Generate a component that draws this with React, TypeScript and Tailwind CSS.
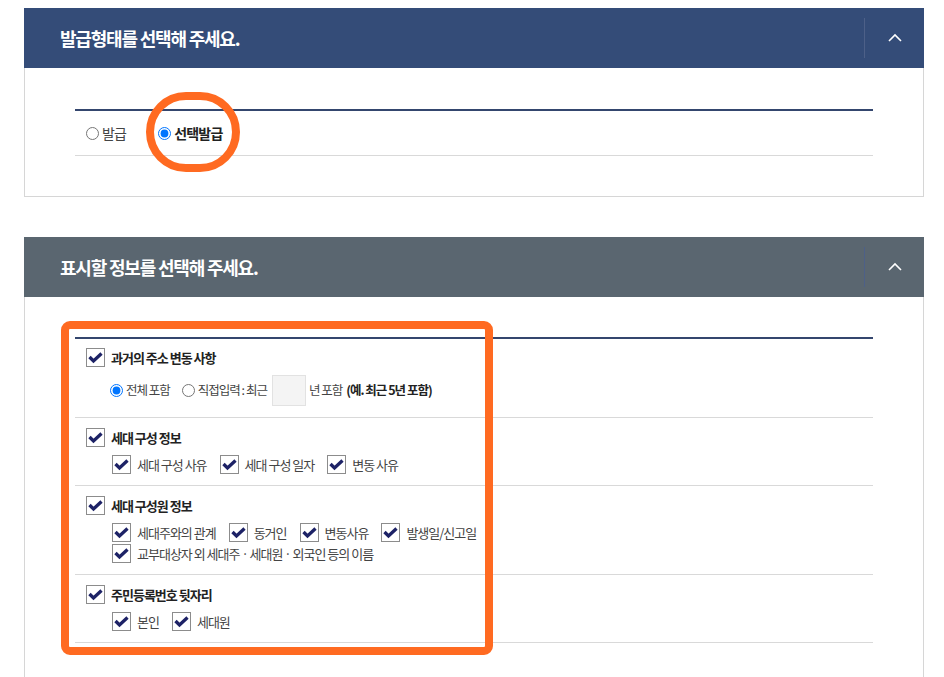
import * as React from "react";

const font = "font-['Noto_Sans_CJK_KR','Noto_Sans',sans-serif]";

function Check() {
  return (
    <span className="flex h-[19px] w-[19px] shrink-0 items-center justify-center border border-[#8c8c8c] bg-white">
      <svg width="15" height="13" viewBox="0 0 15 13">
        <path
          d="M1.5 6 L5.5 10 L13.5 2.5"
          fill="none"
          stroke="#1d2266"
          strokeWidth="3.3"
          strokeLinejoin="miter"
        />
      </svg>
    </span>
  );
}

function SubCheck({ label }: { label: string }) {
  return (
    <span className="flex items-center gap-[6px]">
      <Check />
      <span className="text-[13px] leading-[19px] tracking-[-1px] text-[#444]">{label}</span>
    </span>
  );
}

function Header({ title, bg }: { title: string; bg: string }) {
  return (
    <div className={`flex h-[60px] items-center justify-between ${bg}`}>
      <h2 className="pl-9 text-[18px] font-bold tracking-[-1.2px] text-white">{title}</h2>
      <div className="flex h-full items-center">
        <span className="h-10 w-px bg-[#4d6088]" />
        <span className="flex w-[59px] items-center justify-center">
          <svg width="16" height="10" viewBox="0 0 16 10">
            <path d="M2 8 L8 2 L14 8" fill="none" stroke="white" strokeWidth="1.6" />
          </svg>
        </span>
      </div>
    </div>
  );
}

export default function App() {
  const groups = [
    { title: "세대 구성 정보", subs: [["세대 구성 사유", "세대 구성 일자", "변동 사유"]] },
    {
      title: "세대 구성원 정보",
      subs: [
        ["세대주와의 관계", "동거인", "변동사유", "발생일/신고일"],
        ["교부대상자 외 세대주 · 세대원 · 외국인 등의 이름"],
      ],
    },
    { title: "주민등록번호 뒷자리", subs: [["본인", "세대원"]] },
  ];

  return (
    <div className={`relative min-h-screen bg-white pt-2 pl-6 pr-5 ${font}`}>
      <section className="w-[900px]">
        <Header title="발급형태를 선택해 주세요." bg="bg-[#344c78]" />
        <div className="border border-t-0 border-[#d6d6d6] px-[50px] pt-[41px] pb-10">
          <div className="h-[2px] bg-[#34466e]" />
          <div className="flex h-[45px] items-center gap-8 border-b border-[#d9d9d9] pl-[11px] text-[14px] tracking-[-0.8px]">
            <label className="flex items-center gap-[3px] text-[#444]">
              <input type="radio" name="issue" readOnly />
              발급
            </label>
            <label className="flex items-center gap-[3px] font-bold text-[#222]">
              <input type="radio" name="issue" defaultChecked />
              선택발급
            </label>
          </div>
        </div>
      </section>

      <section className="mt-10 w-[900px]">
        <Header title="표시할 정보를 선택해 주세요." bg="bg-[#5a6670]" />
        <div className="border border-t-0 border-[#d6d6d6] px-[50px] pt-10 pb-10">
          <div className="h-[2px] bg-[#34466e]" />

          <div className="flex flex-col gap-2 border-b border-[#d9d9d9] pt-[9px] pb-[11px] pl-[11px]">
            <div className="flex items-center gap-[6px]">
              <Check />
              <span className="text-[13px] leading-[19px] font-bold tracking-[-1px] text-[#222]">
                과거의 주소 변동 사항
              </span>
            </div>
            <div className="flex h-[31px] items-center pl-6 text-[12.5px] tracking-[-1px] text-[#444]">
              <label className="flex items-center gap-[3px]">
                <input type="radio" name="past" defaultChecked />
                전체 포함
              </label>
              <label className="ml-3 flex items-center gap-[3px]">
                <input type="radio" name="past" readOnly />
                직접입력 : 최근
              </label>
              <span className="ml-[5px] h-[31px] w-[34px] border border-[#e2e2e2] bg-[#f4f4f4]" />
              <span className="ml-[3px]">년 포함</span>
              <span className="ml-[4px] font-bold text-[#222]">(예. 최근 5년 포함)</span>
            </div>
          </div>

          {groups.map((g, i) => (
            <div
              key={i}
              className="flex flex-col gap-2 border-b border-[#d9d9d9] pt-[10px] pb-[11px] pl-[11px]"
            >
              <div className="flex items-center gap-[6px]">
                <Check />
                <span className="text-[13px] leading-[19px] font-bold tracking-[-1px] text-[#222]">
                  {g.title}
                </span>
              </div>
              <div className="flex flex-col gap-[2px] pl-[26px]">
                {g.subs.map((row, j) => (
                  <div key={j} className="flex items-center gap-[13px]">
                    {row.map((s) => (
                      <SubCheck key={s} label={s} />
                    ))}
                  </div>
                ))}
              </div>
            </div>
          ))}
        </div>
      </section>

      {/* annotations */}
      <div className="pointer-events-none absolute top-[92px] left-[146px] h-[80px] w-[94px] rounded-full border-[8px] border-[#ff6a21]" />
      <div className="pointer-events-none absolute top-[321px] left-[61px] h-[334px] w-[432px] rounded-[9px] border-[8px] border-[#ff6a21]" />
    </div>
  );
}
